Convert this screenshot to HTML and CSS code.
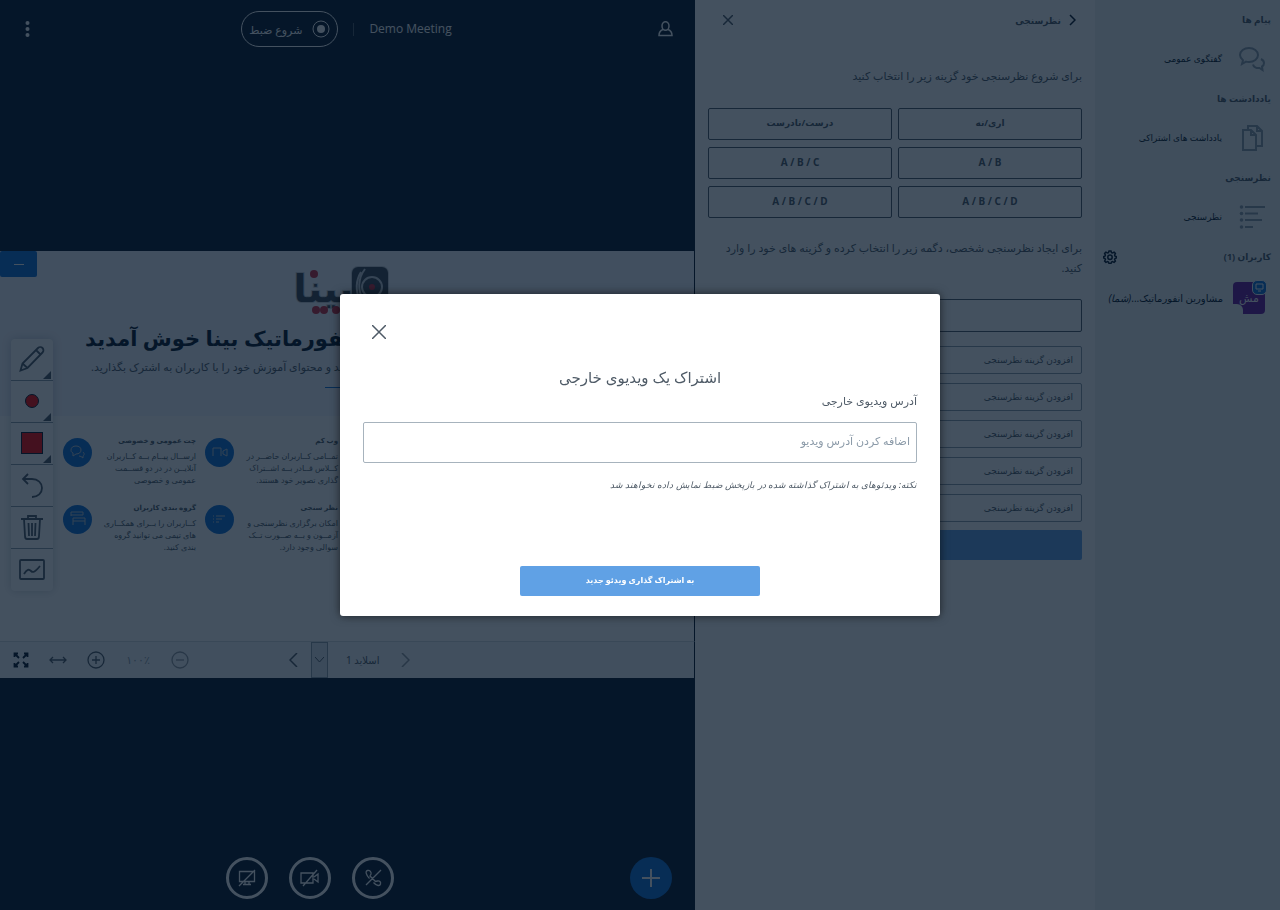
FILE: index.html
```html
<!DOCTYPE html>
<html lang="fa" dir="rtl">
<head>
    <meta charset="UTF-8">
    <meta name="viewport" content="width=device-width, initial-scale=1.0">
    <title>Demo Meeting</title>
    <link rel="stylesheet" href="styles.css">
</head>
<body>

    <div class="app">
        <nav class="sidebar">
            <h2>پیام ها</h2>
            <a href="#chat" class="side-item">
                <svg class="side-icon" viewBox="0 0 26 26"><path d="M10 2c5 0 9 3 9 7s-4 7-9 7c-1 0-2 0-3-.4L3 18l1-3.800C2.500 13 1 11 1 9c0-4 4-7 9-7z"/><path d="M22 13c2 1 3 2.500 3 4 0 1.500-1 3-2 3.500l.5 3.500-3-2c-3 .5-6-1-6.500-3.500"/></svg>
                گفتگوی عمومی
            </a>
            <h2>یاددادشت ها</h2>
            <a href="#notes" class="side-item">
                <svg class="side-icon" viewBox="0 0 26 26"><path d="M4 5h8l5 5v15H4zM12 5v5h5M9 5V1h9l5 5v15h-6M18 1v5h5"/></svg>
                یادداشت های اشتراکی
            </a>
            <h2>نظرسنجی</h2>
            <a href="#poll" class="side-item">
                <svg class="side-icon" viewBox="0 0 26 26"><path d="M6 3h20M6 9.500h13M6 16h17M6 23h8"/><g class="dots"><circle cx="2.500" cy="3" r="1.800"/><circle cx="2.500" cy="9.500" r="1.800"/><circle cx="2.500" cy="16" r="1.800"/><circle cx="2.500" cy="23" r="1.800"/></g></svg>
                نظرسنجی
            </a>
            <div class="users-title">
                <h2>کاربران (1)</h2>
                <button type="button" class="icon-btn" aria-label="مدیریت کاربران">
                    <svg width="14" height="14" viewBox="0 0 14 14"><path d="M6 1h2l.5 1.600 1 .4 1.600-.8 1.300 1.300-.8 1.600.4 1 1.400.4v1.500l-1.400.5-.4 1 .8 1.600-1.300 1.300-1.600-.8-1 .4L8 13.500H6l-.5-1.500-1-.4-1.600.8-1.300-1.300.8-1.600-.4-1L.6 8V6.500L2 6.100l.4-1-.8-1.600 1.300-1.300 1.600.8 1-.4z"/><circle cx="7" cy="7.200" r="2.200"/></svg>
                </button>
            </div>
            <div class="user">
                <span class="avatar">مش<span class="presenter"><svg width="9" height="9" viewBox="0 0 9 9"><path d="M1 1h7v5H1zM3 8h3"/></svg></span></span>
                <span class="user-name">مشاورین انفورماتیک...<em>(شما)</em></span>
            </div>
        </nav>

        <section class="poll">
            <header class="poll-header">
                <button type="button" class="poll-back">
                    <svg width="7" height="12" viewBox="0 0 7 12"><path d="M1 1l5 5-5 5"/></svg>
                    نظرسنجی
                </button>
                <button type="button" class="icon-btn" aria-label="بستن">
                    <svg width="10" height="10" viewBox="0 0 10 10"><path d="M0 0l10 10M10 0L0 10"/></svg>
                </button>
            </header>
            <p class="poll-start">برای شروع نظرسنجی خود گزینه زیر را انتخاب کنید</p>
            <div class="poll-types">
                <button type="button">اری/نه</button>
                <button type="button">درست/نادرست</button>
                <button type="button" class="letters" dir="ltr">A / B</button>
                <button type="button" class="letters" dir="ltr">A / B / C</button>
                <button type="button" class="letters" dir="ltr">A / B / C / D</button>
                <button type="button" class="letters" dir="ltr">A / B / C / D</button>
            </div>
            <p class="poll-custom">برای ایجاد نظرسنجی شخصی، دگمه زیر را انتخاب کرده و گزینه های خود را وارد کنید.</p>
            <input type="text" class="poll-question" aria-label="سوال نظرسنجی">
            <div class="poll-options">
                <input type="text" placeholder="افزودن گزینه نظرسنجی" aria-label="گزینه ۱">
                <input type="text" placeholder="افزودن گزینه نظرسنجی" aria-label="گزینه ۲">
                <input type="text" placeholder="افزودن گزینه نظرسنجی" aria-label="گزینه ۳">
                <input type="text" placeholder="افزودن گزینه نظرسنجی" aria-label="گزینه ۴">
                <input type="text" placeholder="افزودن گزینه نظرسنجی" aria-label="گزینه ۵">
            </div>
            <button type="button" class="poll-submit" aria-label="شروع نظرسنجی"></button>
        </section>

        <main class="meeting">
            <header class="navbar">
                <button type="button" class="icon-btn" aria-label="کاربران">
                    <svg width="15" height="16" viewBox="0 0 15 16"><ellipse cx="7.500" cy="5" rx="3.500" ry="4.300"/><path d="M5 8.500C2 9.500 1 11 1 14.500h13c0-3.500-1-5-4-6"/></svg>
                </button>
                <div class="navbar-center">
                    <span class="meeting-name">Demo Meeting</span>
                    <span class="divider"></span>
                    <button type="button" class="record">
                        <svg width="18" height="18" viewBox="0 0 18 18"><circle cx="9" cy="9" r="8"/><circle class="fill" cx="9" cy="9" r="4"/></svg>
                        شروع ضبط
                    </button>
                </div>
                <button type="button" class="icon-btn" aria-label="تنظیمات">
                    <svg width="15" height="16" viewBox="0 0 15 16"><g class="fill"><circle cx="7.500" cy="2" r="2"/><circle cx="7.500" cy="8" r="2"/><circle cx="7.500" cy="14" r="2"/></g></svg>
                </button>
            </header>

            <div class="stage">
                <div class="slide">
                    <div class="slide-hero">
                        <svg class="logo" width="100" height="56" viewBox="0 0 100 56">
                            <text class="logo-text" x="60" y="39">بینا</text>
                            <rect x="59" y="4" width="36" height="44" rx="6"/>
                            <g class="logo-lines"><circle cx="79" cy="24" r="10"/><path d="M72 6c-7 9-8 22-1 32M68 9c-5 8-6 19-1 28"/></g>
                            <g class="logo-dots"><circle cx="79" cy="24" r="3"/><circle cx="21" cy="11" r="4"/><circle cx="23" cy="47" r="4"/><circle cx="31" cy="47" r="4"/><circle cx="43" cy="47" r="4"/></g>
                        </svg>
                        <h1>انفورماتیک بینا خوش آمدید</h1>
                        <p>کنید و محتوای آموزش خود را با کاربران به اشترک بگذارید.</p>
                        <span class="hero-line"></span>
                    </div>
                    <div class="features">
                        <div class="feature">
                            <span class="feature-icon"><svg width="16" height="16" viewBox="0 0 16 16"><path d="M6 2c3 0 5 1.500 5 4s-2 4-5 4l-3 2V9C1 8 1 7 1 6c0-2.500 2-4 5-4zM13 8c2 2 1 3 0 4v2l-2-1.500-2-.5"/></svg></span>
                            <div><h3>چت عمومی و خصوصی</h3><p>ارســال پیــام بــه کــاربران<br>آنلایــن در در دو قســمت<br>عمومی و خصوصی</p></div>
                        </div>
                        <div class="feature">
                            <span class="feature-icon"><svg width="16" height="16" viewBox="0 0 16 16"><path d="M1 12V4h8v8M11 7l4-2v7l-4-2z"/></svg></span>
                            <div><h3>وب کم</h3><p>تمــامی کــاربران حاضــر در<br>کــلاس قــادر بــه اشــتراک<br>گذاری تصویر خود هستند.</p></div>
                        </div>
                        <div class="feature">
                            <span class="feature-icon"><svg width="16" height="16" viewBox="0 0 16 16"><path d="M1 5V1h12v3M1 4h12M3 14V7h12v7M3 10h12"/></svg></span>
                            <div><h3>گروه بندی کاربران</h3><p>کــاربران را بــرای همکــاری<br>های تیمی می توانید گروه<br>بندی کنید.</p></div>
                        </div>
                        <div class="feature">
                            <span class="feature-icon"><svg width="16" height="16" viewBox="0 0 16 16"><path d="M4 5h9M4 8h6M4 11h3M1 5h1M1 8h1M1 11h1"/></svg></span>
                            <div><h3>نظر سنجی</h3><p>امکان برگزاری نظرسنجی و<br>آزمــون و بــه صــورت تــک<br>سوالی وجود دارد.</p></div>
                        </div>
                    </div>

                    <button type="button" class="hide-slide" aria-label="کوچک کردن ارائه">
                        <svg width="10" height="10" viewBox="0 0 10 10"><path d="M0 5.500h10"/></svg>
                    </button>

                    <div class="tools">
                        <button type="button" class="has-menu" aria-label="مداد">
                            <svg width="26" height="26" viewBox="0 0 26 26"><path d="M1.500 24.500l2-7L19 2c1.500-1.500 3.500-1 4.500 0s1.500 3 0 4.500L8.500 22zM3.500 17.500l5 4.500M17 4l5 5"/></svg>
                        </button>
                        <button type="button" class="has-menu" aria-label="ضخامت">
                            <svg width="26" height="26" viewBox="0 0 26 26"><circle class="red" cx="13" cy="13" r="6.500"/></svg>
                        </button>
                        <button type="button" class="has-menu" aria-label="رنگ">
                            <svg width="26" height="26" viewBox="0 0 26 26"><rect class="red" x="2.500" y="2.500" width="21" height="21"/></svg>
                        </button>
                        <button type="button" aria-label="واگرد">
                            <svg width="26" height="26" viewBox="0 0 26 26"><path d="M9 2L4 7l5 5M4 7h9c6 0 10 4 10 9s-4 9-10 9"/></svg>
                        </button>
                        <button type="button" aria-label="پاک کردن">
                            <svg width="26" height="26" viewBox="0 0 26 26"><path d="M2 5h22M9 5V2h8v3M5 5l1 17c0 2 1 3 2 3h10c1 0 2-1 2-3l1-17M9.500 9l.5 13M13 9v13M16.500 9L16 22"/></svg>
                        </button>
                        <button type="button" aria-label="تخته چندکاربره">
                            <svg width="26" height="26" viewBox="0 0 26 26"><rect x="1" y="3" width="24" height="19" rx="1"/><path d="M5 17c3-5 5-5 7-3s4 1 9-5"/></svg>
                        </button>
                    </div>
                </div>

                <div class="slide-bar">
                    <div class="slide-nav">
                        <button type="button" class="icon-btn faded" aria-label="اسلاید قبلی"><svg width="9" height="14" viewBox="0 0 9 14"><path d="M1 0l7 7-7 7"/></svg></button>
                        <label for="slideSelect">اسلاید 1</label>
                        <span class="slide-select">
                            <select id="slideSelect"><option>1</option></select>
                            <svg width="9" height="6" viewBox="0 0 9 6"><path d="M0 0l4.500 5L9 0"/></svg>
                        </span>
                        <button type="button" class="icon-btn" aria-label="اسلاید بعدی"><svg width="9" height="14" viewBox="0 0 9 14"><path d="M8 0L1 7l7 7"/></svg></button>
                    </div>
                    <div class="zoom">
                        <button type="button" class="icon-btn faded" aria-label="کوچک نمایی"><svg width="18" height="18" viewBox="0 0 18 18"><circle cx="9" cy="9" r="8"/><path d="M5 9h8"/></svg></button>
                        <span class="zoom-value" dir="ltr">۱۰۰٪</span>
                        <button type="button" class="icon-btn" aria-label="بزرگ نمایی"><svg width="18" height="18" viewBox="0 0 18 18"><circle cx="9" cy="9" r="8"/><path d="M5 9h8M9 5v8"/></svg></button>
                        <button type="button" class="icon-btn" aria-label="اندازه عرض"><svg width="18" height="10" viewBox="0 0 18 10"><path d="M1 5h16M4 2L1 5l3 3M14 2l3 3-3 3"/></svg></button>
                        <button type="button" class="icon-btn dark" aria-label="تمام صفحه"><svg width="16" height="16" viewBox="0 0 16 16"><path d="M1.500 5V1.500H5M1.500 1.500L6 6M11 1.500h3.500V5M14.500 1.500L10 6M1.500 11v3.500H5M1.500 14.500L6 10M14.500 11v3.500H11M14.500 14.500L10 10"/></svg></button>
                    </div>
                </div>
            </div>

            <footer class="actions">
                <button type="button" class="plus" aria-label="عملیات"><svg width="20" height="20" viewBox="0 0 20 20"><path d="M10 1v18M1 10h18"/></svg></button>
                <div class="media">
                    <button type="button" aria-label="صدا"><svg width="18" height="18" viewBox="0 0 18 18"><path d="M17 1L2 16M5.500 9.500C2 6 1 2 3.500 1.500S7.500 3 7 5L6 7l5.500 5.500 2-.5c2-.5 3.500 1 3 3s-3.500 2.500-7-1.500"/></svg></button>
                    <button type="button" aria-label="وب کم"><svg width="20" height="18" viewBox="0 0 20 18"><path d="M1 4h12v10H1zM14 8l4-3v8l-4-3M17 1L3 17"/></svg></button>
                    <button type="button" aria-label="اشتراک صفحه"><svg width="18" height="18" viewBox="0 0 18 18"><path d="M1.500 2.500h15v10h-15zM5 15.500h8M7 13v2M11 13v2M17 1L1 17"/></svg></button>
                </div>
            </footer>
        </main>
    </div>

    <div class="overlay">
        <form class="modal" role="dialog" aria-labelledby="modalTitle">
            <button type="button" class="modal-close" aria-label="بستن">
                <svg width="14" height="14" viewBox="0 0 14 14"><path d="M0 0l14 14M14 0L0 14"/></svg>
            </button>
            <h2 id="modalTitle">اشتراک یک ویدیوی خارجی</h2>
            <label for="videoUrl">آدرس ویدیوی خارجی</label>
            <input type="text" id="videoUrl" placeholder="اضافه کردن آدرس ویدیو">
            <p class="note">نکته: ویدئوهای به اشتراک گذاشته شده در بازپخش ضبط نمایش داده نخواهند شد</p>
            <button type="submit" class="share">به اشتراک گذاری ویدئو جدید</button>
        </form>
    </div>

</body>
</html>
```
FILE: styles.css
```css
* {
    box-sizing: border-box;
}

body {
    margin: 0;
    font-family: "Noto Sans", "DejaVu Sans", sans-serif;
    font-size: 11px;
    line-height: 20px;
    color: #4e5a66;
    background-color: #06172a;
}

h1, h2, h3, p {
    margin: 0;
}

button, input, select {
    font-family: inherit;
    font-size: inherit;
    color: inherit;
}

button {
    padding: 0;
    border: none;
    background: none;
    cursor: pointer;
}

svg {
    display: block;
    fill: none;
    stroke: currentColor;
    stroke-width: 1;
}

.icon-btn {
    display: flex;
    flex: none;
}

.app {
    display: flex;
    min-height: 100vh;
}

/* sidebar */
.sidebar {
    flex: none;
    width: 185px;
    padding: 0 9px 0 5px;
    background-color: #f0f3f4;
}

.sidebar h2 {
    font-size: 9px;
    line-height: 39px;
    white-space: nowrap;
}

.side-item, .user {
    display: flex;
    align-items: center;
    gap: 17px;
    height: 40px;
    padding-right: 6px;
    font-size: 9px;
    color: #06172a;
    text-decoration: none;
    white-space: nowrap;
}

.side-icon {
    width: 26px;
    height: 26px;
    color: #8b9aa8;
    stroke-width: 2;
}

.side-icon .dots {
    fill: currentColor;
    stroke: none;
}

.users-title {
    display: flex;
    justify-content: space-between;
    align-items: center;
    padding-left: 3px;
}

.users-title .icon-btn {
    color: #06172a;
}

.users-title svg {
    stroke-width: 1.5;
}

.user {
    gap: 10px;
    height: 44px;
    font-size: 11px;
}

.avatar {
    position: relative;
    flex: none;
    width: 32px;
    height: 32px;
    line-height: 32px;
    text-align: center;
    color: white;
    background-color: #6a1b9a;
    border-radius: 4px;
}

.avatar::after {
    content: "";
    position: absolute;
    left: 0;
    bottom: 0;
    width: 10px;
    height: 10px;
    background-color: #f0f3f4;
    border-top-right-radius: 6px;
}

.presenter {
    position: absolute;
    top: -2px;
    right: -2px;
    padding: 2px;
    background-color: #0f70d7;
    border: 1px solid #f3f6f9;
    border-radius: 5px;
}

.user-name {
    font-size: 10px;
}

/* poll panel */
.poll {
    flex: none;
    width: 400px;
    padding: 0 13px;
    background-color: white;
}

.poll-header {
    display: flex;
    justify-content: space-between;
    align-items: center;
    height: 40px;
    padding: 0 6px 0 15px;
}

.poll-back {
    display: flex;
    align-items: center;
    gap: 8px;
    font-size: 9px;
    font-weight: bold;
}

.poll-header svg {
    stroke-width: 1.5;
}

.poll-back svg {
    color: #06172a;
}

.poll-start {
    margin-top: 26px;
}

.poll-types {
    display: grid;
    grid-template-columns: 1fr 1fr;
    gap: 7px 6px;
    margin: 22px 0 20px;
}

.poll-types button {
    height: 32px;
    padding-bottom: 4px;
    font-size: 9px;
    font-weight: bold;
    border: 1px solid #4e5a66;
    border-radius: 2px;
}

.poll-types .letters {
    padding-bottom: 2px;
    font-size: 10px;
}

.poll input {
    display: block;
    width: 100%;
    padding: 0 8px 2px;
    font-size: 9px;
    background: none;
    border: 1px solid #8b9aa8;
    border-radius: 2px;
}

.poll input::placeholder {
    color: #4e5a66;
    opacity: 1;
}

.poll .poll-question {
    height: 33px;
    margin: 21px 0 14px;
    border-color: #4e5a66;
}

.poll-options {
    display: grid;
    gap: 9px;
}

.poll-options input {
    height: 28px;
}

.poll-submit {
    display: block;
    width: 100%;
    height: 30px;
    margin-top: 8px;
    background-color: #60a1e5;
    border-radius: 2px;
}

/* meeting area */
.meeting {
    display: flex;
    flex: 1;
    flex-direction: column;
    min-width: 0;
}

.navbar {
    display: flex;
    justify-content: space-between;
    align-items: center;
    height: 58px;
    padding: 0 22px 0 20px;
    color: white;
}

.navbar svg {
    stroke-width: 1.5;
}

.navbar .record svg {
    stroke-width: 1;
}

.navbar .fill {
    fill: currentColor;
    stroke: none;
}

.navbar-center {
    display: flex;
    align-items: center;
    gap: 15px;
}

.meeting-name {
    font-family: "Open Sans", sans-serif;
    font-size: 12px;
}

.divider {
    width: 1px;
    height: 13px;
    background-color: #4e5a66;
}

.record {
    display: flex;
    align-items: center;
    gap: 10px;
    height: 36px;
    padding: 0 7px;
    border: 1px solid white;
    border-radius: 18px;
}

.stage {
    margin: auto 0;
    padding-top: 25px;
}

.slide {
    position: relative;
    aspect-ratio: 16 / 9;
    background-color: white;
    border-right: 1px solid #06172a;
    overflow: hidden;
}

.slide-hero {
    display: flex;
    flex-direction: column;
    align-items: flex-end;
    height: 165px;
    padding: 12px 290px 0 85px;
    background-color: #f3f5fd;
    white-space: nowrap;
}

.logo {
    margin-left: 208px;
    stroke: none;
}

.logo rect, .logo-text {
    fill: #3c4650;
    stroke: #c5ccd4;
    stroke-width: 2;
    paint-order: stroke;
}

.logo-text {
    font-family: "DejaVu Sans", sans-serif;
    font-size: 38px;
    font-weight: bold;
}

.logo-lines {
    stroke: #c5ccd4;
    stroke-width: 2;
}

.logo-dots {
    fill: #c8283c;
}

.slide-hero h1 {
    font-size: 21px;
    line-height: 38px;
    color: #06172a;
}

.slide-hero p {
    margin-left: 6px;
}

.hero-line {
    width: 44px;
    height: 1px;
    margin: 10px 0 0 240px;
    background-color: #0f70d7;
}

.features {
    display: grid;
    grid-template-columns: 133px 133px;
    gap: 9px;
    direction: ltr;
    padding: 19px 0 0 63px;
    line-height: 12px;
}

.feature {
    display: flex;
    justify-content: space-between;
    height: 58px;
    white-space: nowrap;
}

.feature div {
    direction: rtl;
}

.feature h3 {
    margin-bottom: 3px;
    font-size: 7px;
    line-height: 12px;
}

.feature p {
    font-size: 8px;
}

.feature-icon {
    display: grid;
    place-items: center;
    width: 29px;
    height: 29px;
    margin-top: 3px;
    color: #b9c4cf;
    background-color: #0f70d7;
    border-radius: 50%;
}

.hide-slide {
    position: absolute;
    top: 0;
    left: 0;
    display: grid;
    place-items: center;
    width: 37px;
    height: 26px;
    color: white;
    background-color: #0f70d7;
    border-radius: 2px;
}

.tools {
    position: absolute;
    top: 88px;
    left: 11px;
    width: 42px;
    background-color: white;
    border-radius: 4px;
    box-shadow: 0 0 10px rgba(6, 23, 42, 0.2);
}

.tools button {
    position: relative;
    display: grid;
    place-items: center;
    width: 42px;
    height: 42px;
    border-bottom: 1px solid #8b9aa8;
}

.tools button:last-child {
    border-bottom: none;
}

.tools svg {
    stroke-width: 1.8;
}

.tools .red {
    fill: #f00;
    stroke: #06172a;
    stroke-width: 1;
}

.has-menu::after {
    content: "";
    position: absolute;
    right: 2px;
    bottom: 1px;
    border-left: 8px solid transparent;
    border-bottom: 8px solid #4e5a66;
}

.slide-bar {
    display: flex;
    justify-content: flex-end;
    gap: 100px;
    height: 37px;
    padding-left: 13px;
    background-color: #f3f6f9;
    border-top: 1px solid #d4d9df;
    border-right: 1px solid #06172a;
}

.slide-nav, .zoom {
    display: flex;
    align-items: center;
}

.slide-nav {
    gap: 13px;
    font-size: 10px;
    white-space: nowrap;
}

.slide-nav label {
    padding: 0 8px 0 5px;
}

.slide-select {
    position: relative;
    width: 17px;
    height: 36px;
}

.slide-select select {
    width: 17px;
    height: 36px;
    padding: 0;
    color: transparent;
    background-color: #dce4ec;
    border: 1px solid #8b9aa8;
    appearance: none;
}

.slide-select svg {
    position: absolute;
    top: 15px;
    left: 4px;
    pointer-events: none;
}

.slide-nav .icon-btn svg {
    stroke-width: 1.5;
}

.zoom {
    gap: 20px;
}

.zoom-value {
    width: 26px;
    text-align: center;
    color: #8b9aa8;
}

.faded {
    opacity: 0.6;
}

.dark {
    color: #06172a;
}

.zoom svg {
    stroke-width: 1.3;
}

.zoom .dark svg {
    stroke-width: 1.8;
}

.actions {
    display: flex;
    align-items: center;
    height: 64px;
    padding-right: 23px;
}

.actions button {
    display: grid;
    place-items: center;
    width: 42px;
    height: 42px;
    color: white;
    border-radius: 50%;
}

.actions .plus {
    background-color: #0f70d7;
}

.actions svg {
    stroke-width: 1.3;
}

.actions .plus svg {
    stroke-width: 2;
}

.media {
    display: flex;
    flex: 1;
    justify-content: center;
    gap: 21px;
    margin-right: 10px;
}

.media button {
    border: 3px solid white;
}

/* modal */
.overlay {
    position: fixed;
    inset: 0;
    display: grid;
    place-items: center;
    background-color: rgba(6, 23, 42, 0.75);
}

.modal {
    display: flex;
    flex-direction: column;
    width: 600px;
    max-width: 100%;
    padding: 20px 23px;
    background-color: white;
    border-radius: 3px;
    box-shadow: 0 0 10px rgba(0, 0, 0, 0.6);
}

.modal-close {
    display: grid;
    place-items: center;
    align-self: flex-end;
    width: 32px;
    height: 36px;
}

.modal-close svg {
    stroke-width: 1.5;
}

.modal h2 {
    margin-top: 15px;
    font-size: 15px;
    font-weight: normal;
    line-height: 24px;
    text-align: center;
}

.modal label {
    line-height: 24px;
}

.modal input {
    height: 41px;
    margin: 9px 0 12px;
    padding: 0 6px 4px;
    border: 1px solid #a7b3bd;
    border-radius: 2px;
}

.modal input::placeholder {
    color: #8b9aa8;
    opacity: 1;
}

.note {
    font-size: 9px;
    font-style: italic;
}

.share {
    align-self: center;
    width: 240px;
    height: 30px;
    padding-bottom: 4px;
    margin-top: 71px;
    font-size: 8px;
    font-weight: bold;
    color: white;
    background-color: #60a1e5;
    border-radius: 2px;
}
```
